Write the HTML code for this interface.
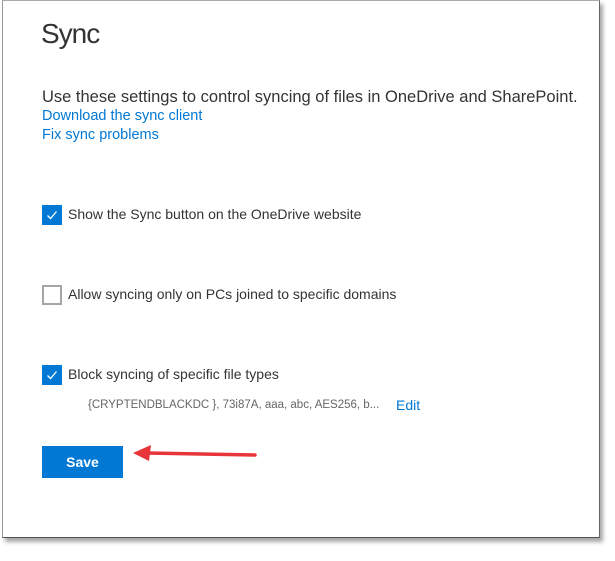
<!DOCTYPE html><html><head><style>
body{margin:0;width:615px;height:561px;background:#fff;position:relative;overflow:hidden;font-family:"Liberation Sans",sans-serif;color:#333}
.pg{position:absolute;left:2px;top:0;width:596px;height:536px;background:#fff;border-left:1px solid #999;border-top:1px solid #aaa;border-right:1px solid #666;border-bottom:1px solid #555;box-shadow:3px 4px 4px rgba(0,0,0,.35)}
.t{position:absolute;white-space:nowrap}
.cb{position:absolute;left:42px;width:20px;height:20px;box-sizing:border-box}
.on{background:#0078d4}
.off{border:2px solid #a6a6a6;background:#fff}
a{color:#0078d4;text-decoration:none}
</style></head><body>
<div class="pg"></div>
<div class="t" style="left:41px;top:18px;font-size:28px;color:#333;letter-spacing:-1px">Sync</div>
<div class="t" style="left:42px;top:88px;font-size:16.5px;color:#333">Use these settings to control syncing of files in OneDrive and SharePoint.</div>
<div class="t" style="left:42px;top:108px;font-size:14.5px"><a>Download the sync client</a></div>
<div class="t" style="left:42px;top:127px;font-size:14.5px"><a>Fix sync problems</a></div>
<div class="cb on" style="top:205px"><svg width="20" height="20"><path d="M5.5 10.5l3 3 6-7" stroke="#fff" stroke-width="1.3" fill="none"/></svg></div>
<div class="t" style="left:68px;top:206px;font-size:14px">Show the Sync button on the OneDrive website</div>
<div class="cb off" style="top:285px"></div>
<div class="t" style="left:68px;top:286px;font-size:14px">Allow syncing only on PCs joined to specific domains</div>
<div class="cb on" style="top:365px"><svg width="20" height="20"><path d="M5.5 10.5l3 3 6-7" stroke="#fff" stroke-width="1.3" fill="none"/></svg></div>
<div class="t" style="left:68px;top:366px;font-size:14px">Block syncing of specific file types</div>
<div class="t" style="left:88px;top:399px;font-size:11.5px;color:#666">{CRYPTENDBLACKDC }, 73i87A, aaa, abc, AES256, b...</div>
<div class="t" style="left:396px;top:397px;font-size:14px"><a>Edit</a></div>
<div style="position:absolute;left:42px;top:446px;width:81px;height:32px;background:#0078d4;color:#fff;font-weight:bold;font-size:14px;text-align:center;line-height:32px">Save</div>
<svg style="position:absolute;left:125px;top:440px" width="140" height="26"><path d="M22 13 L130 15" stroke="#e8353a" stroke-width="3.5" stroke-linecap="round"/><path d="M8 13 L26 5 L24 21 Z" fill="#e8353a"/></svg>
</body></html>
